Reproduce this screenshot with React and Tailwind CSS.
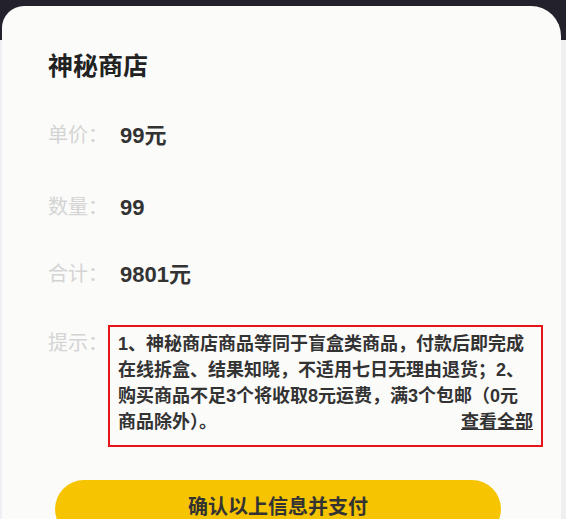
import React from 'react'

const font = { fontFamily: '"Liberation Sans", "Noto Sans CJK SC", sans-serif' }

function Row({ label, value, className = '' }) {
  return (
    <div className={'flex items-center h-[28px] ' + className}>
      <span className="w-[72px] text-[20px] text-[#d4d4d4]">{label}</span>
      <span className="text-[22px] font-bold text-[#333]">{value}</span>
    </div>
  )
}

export default function App() {
  return (
    <div
      style={font}
      className="w-[566px] h-[519px] overflow-hidden bg-[linear-gradient(to_bottom,#23222c_0,#23222c_40px,#efeef0_40px)] pt-[6px] pl-[2px]"
    >
      <div className="w-[559px] h-[520px] bg-[#fbfbfa] rounded-tl-[22px] rounded-tr-[30px] pl-[46px] pt-[36px]">
        <h1 className="text-[25px] font-bold text-[#222] leading-[48px]">神秘商店</h1>

        <div className="mt-[31px] flex flex-col">
          <Row label="单价：" value="99元" />
          <Row label="数量：" value="99" className="mt-[44px]" />
          <Row label="合计：" value="9801元" className="mt-[39px]" />
        </div>

        <div className="mt-[37px] flex items-start">
          <span className="w-[60px] pt-[5px] text-[20px] leading-[26px] text-[#d4d4d4]">提示：</span>
          <div className="w-[435px] border-2 border-[#e8141c] px-[8px] pt-[4px] pb-[10px] text-[18px] leading-[26px] font-bold text-[#333] whitespace-nowrap">
            <div>1、神秘商店商品等同于盲盒类商品，付款后即完成</div>
            <div>在线拆盒、结果知晓，不适用七日无理由退货；2、</div>
            <div>购买商品不足3个将收取8元运费，满3个包邮（0元</div>
            <div className="flex justify-between">
              <span>商品除外）。</span>
              <span className="underline">查看全部</span>
            </div>
          </div>
        </div>

        <button className="mt-[33px] ml-[7px] w-[446px] h-[58px] rounded-full bg-[#f6c400] text-[20px] font-bold text-[#333] flex items-start justify-center pt-[12px]">
          确认以上信息并支付
        </button>
      </div>
    </div>
  )
}
